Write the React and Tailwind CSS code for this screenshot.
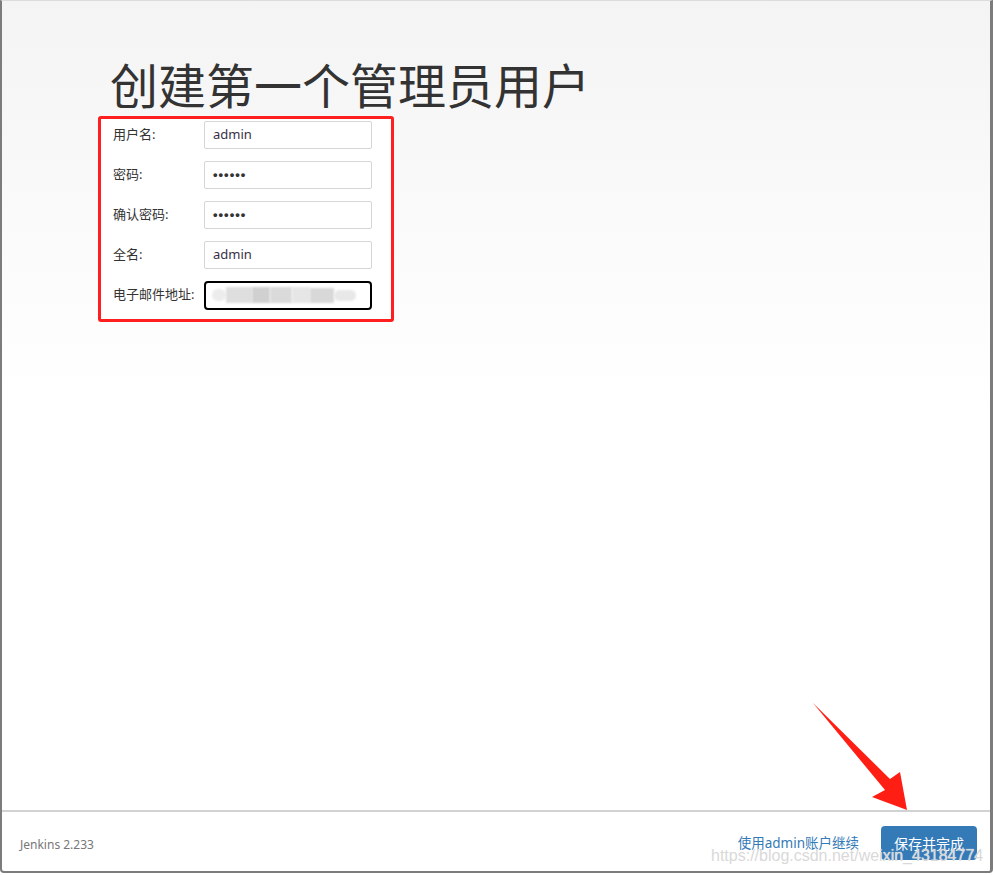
import React from 'react';

const fields = [
  { label: '用户名:', value: 'admin', type: 'text' },
  { label: '密码:', value: '••••••', type: 'dots' },
  { label: '确认密码:', value: '••••••', type: 'dots' },
  { label: '全名:', value: 'admin', type: 'text' },
  { label: '电子邮件地址:', value: '', type: 'email' },
];

const App = () => {
  return (
    <div className="relative w-[993px] h-[875px] bg-white" style={{ fontFamily: '"Noto Sans", "Noto Sans CJK SC", sans-serif' }}>
      <div className="flex flex-col w-[993px] h-[873px] border-t border-t-[#dcdcdc] border-l-2 border-r-[3px] border-b-2 border-[#7c7c7c] rounded-b-[4px] overflow-hidden">
        {/* Main content */}
        <div className="flex-1 bg-gradient-to-b from-[#f4f4f4] via-white to-white pl-[96px]">
          <h1 className="mt-[55px] ml-3 text-[48px] leading-[60px] font-normal text-[#333]">
            创建第一个管理员用户
          </h1>
          <div className="w-[296px] border-[3px] border-[#ff1f1f] rounded-[3px] pt-[2px] pb-[10px] pl-3 flex flex-col gap-3 bg-white">
            {fields.map((f) => (
              <div key={f.label} className="flex items-center h-[28px]">
                <div className="w-[91px] text-[13px] text-[#333] whitespace-nowrap">{f.label}</div>
                {f.type === 'email' ? (
                  <div className="w-[168px] h-[29px] border-2 border-black rounded-[4px] flex items-center px-[6px]">
                    <div className="flex h-[16px] items-center">
                      <div className="w-[14px] h-[12px] bg-[#ececec] rounded-full blur-[1px]" />
                      <div className="w-[26px] h-[16px] bg-[#dedede] blur-[1px]" />
                      <div className="w-[18px] h-[16px] bg-[#d0d0d0] blur-[1px]" />
                      <div className="w-[22px] h-[16px] bg-[#dadada] blur-[1px]" />
                      <div className="w-[18px] h-[16px] bg-[#e6e6e6] blur-[1px]" />
                      <div className="w-[24px] h-[15px] bg-[#d8d8d8] blur-[1px]" />
                      <div className="w-[22px] h-[11px] bg-[#e8e8e8] rounded-full blur-[1px]" />
                    </div>
                  </div>
                ) : (
                  <div className="w-[168px] h-[28px] border border-[#d6d6d6] rounded-[2px] bg-white flex items-center pl-2">
                    {f.type === 'dots' ? (
                      <span className="text-[13px] font-bold tracking-[1px] text-[#333]" style={{ fontFamily: '"Liberation Sans", sans-serif' }}>{f.value}</span>
                    ) : (
                      <span className="text-[13px] text-[#3a2f45]">{f.value}</span>
                    )}
                  </div>
                )}
              </div>
            ))}
          </div>
        </div>

        {/* Footer */}
        <div className="h-[61px] border-t-2 border-[#d2d2d2] flex items-center justify-between pl-[18px] pr-[13px]">
          <span className="text-[12px] text-[#777] mt-[6px]">Jenkins 2.233</span>
          <div className="flex items-center gap-[22px] mt-[3px]">
            <span className="text-[13.5px] text-[#337ab7]">使用admin账户继续</span>
            <button className="h-[34px] w-[96px] bg-[#337ab7] text-white text-[14px] rounded-[4px]">保存并完成</button>
          </div>
        </div>
      </div>

      {/* watermark */}
      <div
        className="absolute left-[711px] top-[848px] text-[16px] leading-none text-[#d9d9d9] whitespace-nowrap"
        style={{ fontFamily: '"Liberation Sans", Arial, sans-serif', textShadow: '0 0 1px #fff' }}
      >
        https://blog.csdn.net/weixin_43184774
      </div>

      {/* red arrow */}
      <svg className="absolute left-0 top-0 pointer-events-none" width="993" height="875">
        <polygon points="813,703 890,779 900,772 907,810 872,797 885,790" fill="#ff1e14" />
      </svg>
    </div>
  );
};

export default App;
